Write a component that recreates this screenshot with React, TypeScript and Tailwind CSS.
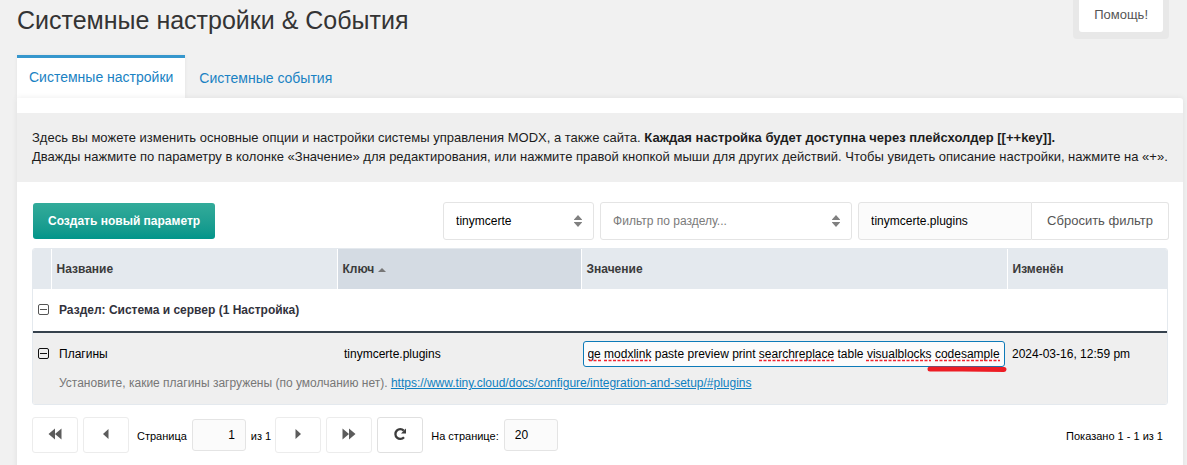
import React, { useEffect, useRef } from "react";

const plugins =
  "advlist autolink lists charmap image modxlink paste preview print searchreplace table visualblocks codesample";

const fieldBorder = "border border-[#e4e4e4] rounded-[3px]";

const Arrows = () => (
  <svg className="pointer-events-none absolute right-3 top-3 h-3.5 w-2" viewBox="0 0 8 14" fill="#808080">
    <path d="M4 1 8 5.500V6H0V5.500zM0 8h8v.5L4 13 0 8.500z" />
  </svg>
);

const Toggle = ({ label, color }: { label: string; color: string }) => (
  <button type="button" aria-label={label} className="block">
    <svg className="h-3 w-3" viewBox="0 0 12 12" fill="none" stroke={color}>
      <rect x="0.5" y="0.5" width="10" height="10" rx="1.5" />
      <path d="M2 5.5h7" />
    </svg>
  </button>
);

const PageButton = ({ label, children, active }: { label: string; children: React.ReactNode; active?: boolean }) => (
  <button
    type="button"
    aria-label={label}
    className={`flex h-9 w-[46px] items-center justify-center rounded-[3px] border bg-white pb-0.5 ${
      active ? "border-[#e0e0e0]" : "border-[#ececec]"
    }`}
  >
    <svg className="h-3.5 w-3.5" viewBox="0 0 14 14" fill="#5c5c5c">
      {children}
    </svg>
  </button>
);

const ValueEditor = () => {
  const input = useRef<HTMLInputElement>(null);

  // keep the end of the value in view
  useEffect(() => {
    if (input.current) input.current.scrollLeft = input.current.scrollWidth;
  }, []);

  return (
    <div className="relative">
      <input
        ref={input}
        aria-label="Значение"
        defaultValue={plugins}
        className="block h-[26px] w-full rounded-[3px] border border-[#0d7ab8] bg-[#fbfbfb] px-1 text-[12px] text-black outline-none"
      />
      {/* spelling marks */}
      <svg className="pointer-events-none absolute right-0 top-0 h-[30px] w-[422px]" viewBox="0 0 422 30" fill="none">
        <path
          d="M6 19.500H18M21 19.500H68M176 19.500H251M283 19.500H348M352 19.500H417"
          stroke="#f0222c"
          strokeWidth="1.500"
          strokeDasharray="3 1.500"
        />
      </svg>
      {/* marker stroke */}
      <svg className="pointer-events-none absolute -right-0.5 top-6 h-2 w-20" viewBox="0 0 80 8" fill="none">
        <path d="M3 4H35L77 4.500" stroke="#ed1c24" strokeWidth="5" strokeLinecap="round" />
      </svg>
    </div>
  );
};

export default function App() {
  return (
    <div className="min-h-screen overflow-hidden bg-[#f1f1f1] pl-[17px] pr-1 font-['Liberation_Sans',Arial,sans-serif] text-[12px] text-black">
      <header className="flex h-[55px] items-start justify-between pr-3.5">
        <h1 className="pt-1 text-[25px] leading-8 text-[#343434]">Системные настройки &amp; События</h1>
        <div className="rounded-b-[4px] bg-[#e8e8e8] px-1.5 pb-[7px]">
          <button type="button" className="h-8 rounded-b-[3px] bg-white px-[15px] pb-0.5 text-[13px] text-[#555]">
            Помощь!
          </button>
        </div>
      </header>

      <nav className="flex text-[14px] text-[#1a82c3]">
        <a href="#settings" className="relative z-10 h-[43px] border-t-[3px] border-[#3697cd] bg-white px-3 pt-[7px] leading-6 shadow-[0_0_4px_rgba(0,0,0,0.06)]">
          Системные настройки
        </a>
        <a href="#events" className="px-3.5 pt-[11px] leading-6">
          Системные события
        </a>
      </nav>

      <main className="relative z-20 min-h-[380px] rounded-tr-[3px] bg-white pt-[15px] shadow-[0_0_6px_rgba(0,0,0,0.08)]">
        <div className="bg-[#efefef] px-[15px] pb-4 pt-[15px] text-[13px] leading-[19px] text-[#1c1c1c]">
          <p>
            Здесь вы можете изменить основные опции и настройки системы управления MODX, а также сайта.{" "}
            <b>Каждая настройка будет доступна через плейсхолдер [[++key]].</b>
          </p>
          <p>
            Дважды нажмите по параметру в колонке «Значение» для редактирования, или нажмите правой кнопкой мыши для
            других действий. Чтобы увидеть описание настройки, нажмите на «+».
          </p>
        </div>

        <div className="px-[15px] pt-5">
          <div className="flex items-center justify-between">
            <button
              type="button"
              className="ml-px h-9 rounded-[3px] bg-linear-to-b from-[#32ab9a] to-[#00958a] px-[15px] text-[12px] font-bold text-white"
            >
              Создать новый параметр
            </button>
            <div className="-mr-px flex">
              <div className="relative mr-1.5">
                <select aria-label="Пространство имён" className={`h-[38px] w-[151px] appearance-none bg-white px-3 ${fieldBorder}`}>
                  <option>tinymcerte</option>
                </select>
                <Arrows />
              </div>
              <div className="relative mr-1.5">
                <select aria-label="Раздел" className={`h-[38px] w-[252px] appearance-none bg-white px-3 text-[#7b7b7b] ${fieldBorder}`}>
                  <option>Фильтр по разделу...</option>
                </select>
                <Arrows />
              </div>
              <input
                aria-label="Поиск"
                defaultValue="tinymcerte.plugins"
                className="h-[38px] w-[174px] rounded-l-[3px] border border-[#e4e4e4] bg-[#fbfbfb] px-3"
              />
              <button type="button" className="h-[38px] rounded-r-[3px] border border-l-0 border-[#e4e4e4] bg-white px-[15px] text-[13px] text-[#555]">
                Сбросить фильтр
              </button>
            </div>
          </div>

          <div className="mt-2 overflow-hidden rounded-[3px] border border-[#e4e9ee]">
            <table className="w-full table-fixed border-collapse text-left">
              <colgroup>
                <col className="w-[18px]" />
                <col className="w-[286px]" />
                <col className="w-[244px]" />
                <col />
                <col className="w-[160px]" />
              </colgroup>
              <thead className="bg-[#e4e9ee] text-[#3b3b3b]">
                <tr className="h-10">
                  <th className="border-r border-white" />
                  <th className="border-r border-white px-[5px]">Название</th>
                  <th className="border-r border-white bg-[#d4dbe3] px-[5px]">
                    Ключ
                    <svg className="ml-1 inline h-1 w-2" viewBox="0 0 8 4" fill="#777">
                      <path d="M4 0 8 4H0z" />
                    </svg>
                  </th>
                  <th className="border-r border-white px-[5px]">Значение</th>
                  <th className="px-[5px]">Изменён</th>
                </tr>
              </thead>
              <tbody>
                <tr className="h-[43px] border-b-2 border-[#36424d]">
                  <td className="pl-[5px]">
                    <Toggle label="Свернуть раздел" color="#555" />
                  </td>
                  <th colSpan={4} className="pl-2 text-[#32323c]">
                    Раздел: Система и сервер (1 Настройка)
                  </th>
                </tr>
                <tr className="h-[42px] bg-[#efefef]">
                  <td className="pl-[5px]">
                    <Toggle label="Скрыть описание" color="#111" />
                  </td>
                  <td className="pl-2">Плагины</td>
                  <td className="pl-[7px]">tinymcerte.plugins</td>
                  <td className="px-0.5">
                    <ValueEditor />
                  </td>
                  <td className="pl-[5px]">2024-03-16, 12:59 pm</td>
                </tr>
                <tr className="h-[30px] bg-[#efefef] align-top text-[#777]">
                  <td />
                  <td colSpan={4} className="pl-2">
                    Установите, какие плагины загружены (по умолчанию нет).{" "}
                    <a href="https://www.tiny.cloud/docs/configure/integration-and-setup/#plugins" className="text-[#0e7fc0] underline">
                      https://www.tiny.cloud/docs/configure/integration-and-setup/#plugins
                    </a>
                  </td>
                </tr>
              </tbody>
            </table>
          </div>

          <div className="mt-3 flex items-center text-[11px]">
            <PageButton label="Первая страница">
              <path d="M7 1.500v11L.5 7zM13.500 1.500v11L7 7z" />
            </PageButton>
            <div className="ml-[5px]">
              <PageButton label="Предыдущая страница">
                <path d="M9.500 2v10L4 7z" />
              </PageButton>
            </div>
            <label htmlFor="page" className="ml-2 mr-[5px] pt-[3px]">
              Страница
            </label>
            <input id="page" defaultValue="1" className={`h-8 w-[54px] bg-[#fbfbfb] px-2.5 text-right text-[12px] ${fieldBorder}`} />
            <span className="ml-[5px] mr-1 pt-[3px]">из 1</span>
            <div className="flex gap-[5px]">
              <PageButton label="Следующая страница">
                <path d="M4.500 2v10L10 7z" />
              </PageButton>
              <PageButton label="Последняя страница">
                <path d="M.5 1.500v11L7 7zM7 1.500v11L13.500 7z" />
              </PageButton>
              <PageButton label="Обновить" active>
                <path d="M11 10.300A4.900 4.900 0 1 1 10.800 3.600" fill="none" stroke="#3c3c3c" strokeWidth="2.300" />
                <path d="M13 1.500v5H8z" fill="#3c3c3c" />
              </PageButton>
            </div>
            <label htmlFor="limit" className="ml-2 mr-[5px] pt-[3px]">
              На странице:
            </label>
            <input id="limit" defaultValue="20" className={`h-8 w-[54px] bg-[#fbfbfb] px-2.5 text-[12px] ${fieldBorder}`} />
            <span className="ml-auto mr-[5px] pt-[3px]">Показано 1 - 1 из 1</span>
          </div>
        </div>
      </main>
    </div>
  );
}
